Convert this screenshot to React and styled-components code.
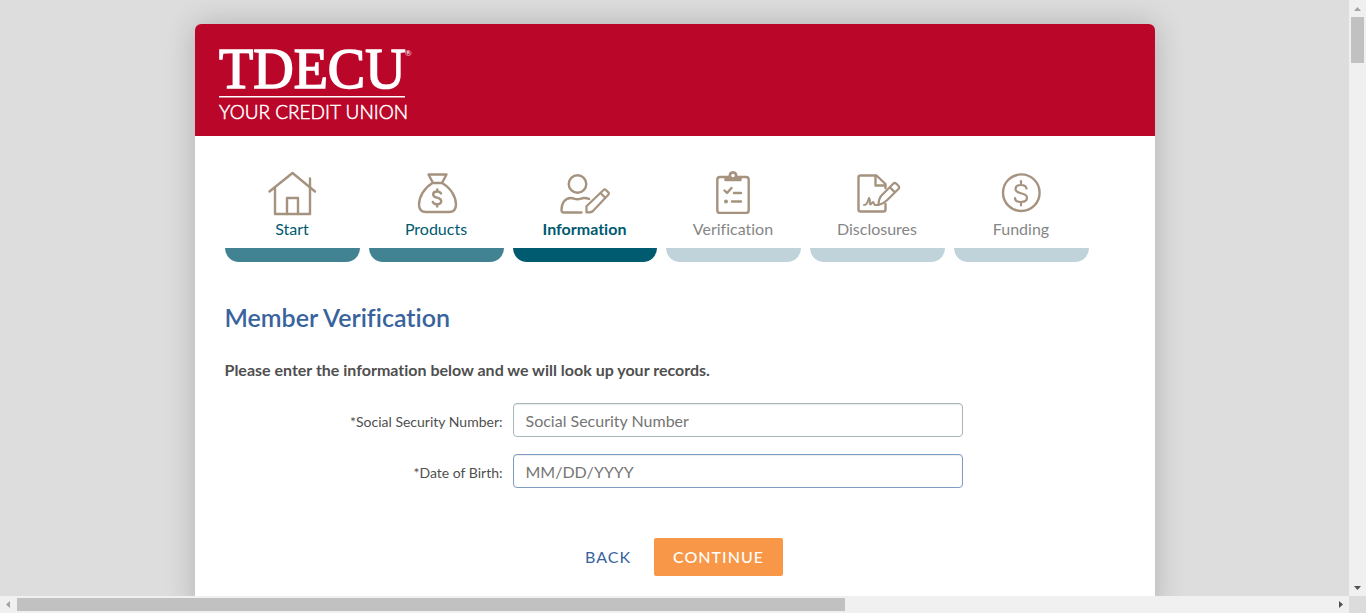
import React from "react";
import styled, { createGlobalStyle, css } from "styled-components";

const GlobalStyle = createGlobalStyle`
  *, *::before, *::after { box-sizing: border-box; }
  html, body { margin: 0; padding: 0; }
  body {
    background: #ddd;
    color: #4f4f4f;
    font-family: Lato, "Open Sans", sans-serif;
    font-size: 16px;
    font-variant-ligatures: none;
    line-height: 20px;
  }
`;

const Shell = styled.div`
  display: grid;
  grid-template-columns: minmax(0, 1fr) 17px;
  grid-template-rows: minmax(0, 1fr) 17px;
  height: 100vh;
`;

const Viewport = styled.div`
  overflow: hidden;
  padding: 24px 24px 0;
  background: #ddd;
`;

const Card = styled.main`
  max-width: 960px;
  min-height: 100%;
  margin: 0 auto;
  background: #fff;
  border-radius: 6px 6px 0 0;
  box-shadow: 0 0 30px rgba(0, 0, 0, 0.2);
`;

const Header = styled.header`
  display: flex;
  padding: 16px 24px;
  background: #b90629;
  border-radius: 6px 6px 0 0;
`;

const Logo = styled.svg`
  display: block;
  width: 200px;
  height: 80px;
  overflow: visible;
  fill: #fff;
`;

const Content = styled.div`
  padding: 34px 30px 40px;
`;

const Steps = styled.ol`
  display: flex;
  gap: 1%;
  margin: 0;
  padding: 0;
  list-style: none;
`;

const Step = styled.li`
  flex: 0 0 ${(p) => (p.$state === "active" ? "16%" : "15%")};
  display: flex;
  flex-direction: column;
  align-items: center;
  color: ${(p) => (p.$state === "todo" ? "#868686" : "#005a70")};
  font-weight: ${(p) => (p.$state === "active" ? 700 : 400)};

  &::after {
    content: "";
    width: 100%;
    height: 14px;
    margin-top: 9px;
    border-radius: 0 0 14px 14px;
    background: ${(p) =>
      ({ done: "#418392", active: "#005a70", todo: "#c0d3db" })[p.$state]};
  }
`;

const StepIcon = styled.svg`
  width: 52px;
  height: 46px;
  margin-bottom: 3px;
  fill: none;
  stroke: #a5937f;
  stroke-width: 2.4;
  stroke-linecap: round;
  stroke-linejoin: round;
`;

const Title = styled.h1`
  margin: 40px 0 0;
  color: #39639d;
  font-size: 25px;
  font-weight: 600;
  line-height: 30px;
`;

const Intro = styled.p`
  margin: 28px 0 23px;
  font-weight: 700;
`;

const Field = styled.div`
  display: grid;
  grid-template-columns: 32% 50%;
  align-items: center;
  margin-bottom: 17px;
`;

const Label = styled.label`
  padding: 4px 10px 0 0;
  font-size: 14px;
  text-align: right;
`;

const Input = styled.input`
  width: 100%;
  height: 34px;
  padding: 0 12px;
  border: 1px solid ${(p) => (p.$highlight ? "#7f9cc4" : "#a9b6b9")};
  border-radius: 4px;
  background: #fff;
  box-shadow: inset 0 1px 1px rgba(0, 0, 0, 0.08);
  color: #4f4f4f;
  font: inherit;
  outline: none;

  &::placeholder {
    color: #757575;
    opacity: 1;
  }
`;

const Actions = styled.div`
  display: flex;
  justify-content: center;
  gap: 4px;
  margin-top: 50px;
`;

const Button = styled.button`
  height: 38px;
  padding: 0 19px;
  border: 0;
  border-radius: 2px;
  background: transparent;
  color: #39639d;
  font: inherit;
  letter-spacing: 1px;
  cursor: pointer;

  ${(p) =>
    p.$primary &&
    css`
      background: #f89747;
      color: #fff;
      font-weight: 500;
    `}
`;

const Bar = styled.div`
  display: flex;
  flex-direction: ${(p) => (p.$vertical ? "column" : "row")};
  background: #f0f0f0;
`;

const Arrow = styled.svg`
  flex: 0 0 17px;
  width: 17px;
  height: 17px;
  fill: ${(p) => (p.$dim ? "#a3a3a3" : "#505050")};
`;

const Track = styled.div`
  flex: 1;
  padding: ${(p) => (p.$vertical ? "0 2px" : "2px 0")};
`;

const Thumb = styled.div`
  width: ${(p) => (p.$vertical ? "100%" : "63%")};
  height: ${(p) => (p.$vertical ? "46px" : "100%")};
  background: #c1c1c1;
`;

const Corner = styled.div`
  background: #dcdcdc;
`;

const icons = {
  start: (
    <>
      <path d="M3.500 21.500 26.500 3 49 21.500" />
      <path d="M9 18.500v25.500h35V18.500M44 18V8.500" />
      <path d="M21 44v-16h11v16" />
    </>
  ),
  products: (
    <>
      <path d="M18.500 4.500h18l-4.500 8.500h-9zM22.500 13C14 18 9 27 9 34.500c0 5 2.500 7.500 7 7.500h23c4.500 0 7-2.500 7-7.500C46 27 41 18 32 13" />
      <path d="M31 23.500c-.8-1.500-2-2-4-2-2.300 0-3.800 1.200-3.800 3s1.500 2.600 3.800 3.200c2.700.7 4.200 1.400 4.200 3.400s-1.700 3.200-4.200 3.200c-2.200 0-3.500-.8-4.200-2.400M27.200 19.500v2M27.200 34.500v2" />
    </>
  ),
  information: (
    <>
      <circle cx="18.500" cy="14" r="8.800" />
      <path d="M22.500 42.500H5c-1.500 0-2.500-.8-2.500-2.500 0-7 3.500-12 9.500-12 2.500 0 3.500 1.200 6.500 1.200s4-1.200 6.500-1.200c2.200 0 3.800.3 5.200 1" />
      <path
        d="M27.500 42.500v-6.300L44.500 20c.8-.8 1.600-.8 2.400 0l2.400 2.400c.8.8.8 1.600 0 2.400L33.500 41.500c-1.500 1-4 1-6 1zM41.500 23l5 5"
        strokeWidth="2.200"
      />
    </>
  ),
  verification: (
    <>
      <path d="M18 7h-5c-1.700 0-2.700 1-2.700 2.700v30.500c0 1.700 1 2.700 2.700 2.700h26c1.700 0 2.700-1 2.700-2.700v-30.500C41.700 8 40.700 7 39 7h-5" />
      <path d="M18.500 10V7h4c0-3 1.300-4.800 3.500-4.800s3.500 1.800 3.500 4.800h4v3z" fill="#a5937f" />
      <circle cx="26" cy="5.500" r="1.700" fill="#fff" stroke="none" />
      <path d="m17.500 20.500 2.500 2.500 4.500-5M27 23h7M25 31.500h9" />
      <circle cx="19" cy="31.500" r="2" fill="#a5937f" stroke="none" />
    </>
  ),
  disclosures: (
    <>
      <path d="M34.500 34v5.500c0 1.200-.8 2-2 2H9.500c-1.200 0-2-.8-2-2v-32c0-1.200.8-2 2-2h16L34.500 14v4" />
      <path d="M24.500 6v9.500h9.500" />
      <path d="M27.500 35c0-4 .8-7 3-9.500L42.200 13.800c1-1 2.200-1 3.200 0l2 2c1 1 1 2.200 0 3.200L36 30.300c-2.500 2.500-4.500 4-8.500 4.700zM38.800 17.200l5.200 5.200" strokeWidth="2.200" />
      <path d="M13 35c3 0 3-2 5-7 2 2 0 6.500 1.500 6.500 1 0 1.500-2.500 2.500-2.500s.8 3 2 3h3" strokeWidth="2" />
    </>
  ),
  funding: (
    <>
      <circle cx="26.300" cy="22.700" r="18.300" />
      <path d="M31.500 18.500c-.4-2.300-2.300-3.500-5.500-3.500s-5.500 1.500-5.500 4c0 2.700 2.400 3.500 5.500 4.200 3.200.7 6 1.600 6 4.400S29.500 32 26 32s-6-1.500-6-4M26 11v4M26 32v3.500" strokeWidth="2.200" />
    </>
  ),
};

const steps = [
  { id: "start", label: "Start", state: "done" },
  { id: "products", label: "Products", state: "done" },
  { id: "information", label: "Information", state: "active" },
  { id: "verification", label: "Verification", state: "todo" },
  { id: "disclosures", label: "Disclosures", state: "todo" },
  { id: "funding", label: "Funding", state: "todo" },
];

const arrows = {
  up: "M5 11h7L8.500 7z",
  down: "M5 7h7l-3.500 4z",
  left: "M10 5v7L6 8.500z",
  right: "M7 5v7l4-3.500z",
};

function ScrollArrow({ dir, dim }) {
  return (
    <Arrow viewBox="0 0 17 17" $dim={dim} aria-hidden="true">
      <path d={arrows[dir]} />
    </Arrow>
  );
}

function TdecuLogo() {
  return (
    <Logo viewBox="0 0 200 80" role="img" aria-label="TDECU Your Credit Union">
      <text x="0" y="48" fontFamily="Liberation Serif, serif" fontSize="56" stroke="#fff" strokeWidth="1.6">
        TDECU
      </text>
      <text x="186" y="16" fontFamily="Lato, sans-serif" fontSize="8">®</text>
      <rect x="0" y="56" width="186" height="1.500" />
      <text x="0" y="79" fontFamily="Lato, sans-serif" fontSize="19" fontWeight="300" stroke="#fff" strokeWidth="0.500">
        YOUR CREDIT UNION
      </text>
    </Logo>
  );
}

export default function App() {
  return (
    <>
      <GlobalStyle />
      <Shell>
        <Viewport>
          <Card>
            <Header>
              <TdecuLogo />
            </Header>
            <Content>
              <Steps>
                {steps.map((s) => (
                  <Step key={s.id} $state={s.state} aria-current={s.state === "active" ? "step" : undefined}>
                    <StepIcon viewBox="0 0 52 46" aria-hidden="true">
                      {icons[s.id]}
                    </StepIcon>
                    {s.label}
                  </Step>
                ))}
              </Steps>
              <Title>Member Verification</Title>
              <Intro>Please enter the information below and we will look up your records.</Intro>
              <form onSubmit={(e) => e.preventDefault()}>
                <Field>
                  <Label htmlFor="ssn">*Social Security Number:</Label>
                  <Input id="ssn" type="text" placeholder="Social Security Number" />
                </Field>
                <Field>
                  <Label htmlFor="dob">*Date of Birth:</Label>
                  <Input id="dob" type="text" placeholder="MM/DD/YYYY" $highlight />
                </Field>
                <Actions>
                  <Button type="button">BACK</Button>
                  <Button type="submit" $primary>CONTINUE</Button>
                </Actions>
              </form>
            </Content>
          </Card>
        </Viewport>
        <Bar $vertical>
          <ScrollArrow dir="up" dim />
          <Track $vertical>
            <Thumb $vertical />
          </Track>
          <ScrollArrow dir="down" />
        </Bar>
        <Bar>
          <ScrollArrow dir="left" dim />
          <Track>
            <Thumb />
          </Track>
          <ScrollArrow dir="right" />
        </Bar>
        <Corner />
      </Shell>
    </>
  );
}
